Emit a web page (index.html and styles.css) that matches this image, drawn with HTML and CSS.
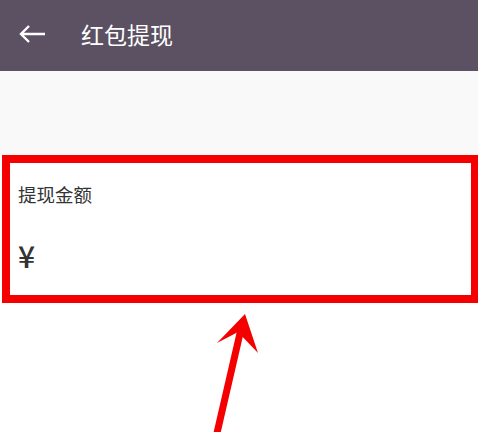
FILE: index.html
```html
<!DOCTYPE html>
<html lang="zh">
	<head>
		<meta charset="UTF-8" />
		<meta name="viewport" content="width=device-width, initial-scale=1.0" />
		<title>红包提现</title>
		<link rel="stylesheet" href="styles.css">
	</head>
	<body>
		<header class="top-bar">
			<svg class="back-icon" width="28" height="20" viewBox="0 0 28 20">
				<path d="M27 10 H3 M11 2 L3 10 L11 18" fill="none" stroke="#fff" stroke-width="2.4" />
			</svg>
			<h1 class="top-title">红包提现</h1>
		</header>
		<div class="gap-area"></div>
		<section class="amount-card">
			<p class="amount-label">提现金额</p>
			<p class="amount-value">¥</p>
		</section>
		<div class="lower-area">
			<svg class="mark-arrow" width="478" height="130" viewBox="0 304 478 130">
				<line x1="217" y1="434" x2="241" y2="330" stroke="#f40000" stroke-width="7" />
				<polygon points="245,315 217,344 238,333 258,354" fill="#f40000" />
			</svg>
		</div>
	</body>
</html>
```

FILE: styles.css
```css
body {
	margin: 0;
	width: 478px;
	height: 432px;
	overflow: hidden;
	background-color: #fff;
	font-family: "Noto Sans CJK SC", "Noto Sans", sans-serif;
}

.top-bar {
	height: 71px;
	background-color: #5b5163;
	display: flex;
	align-items: center;
	padding-left: 18px;
	padding-bottom: 3px;
	box-sizing: border-box;
}
.back-icon {
	display: block;
}
.top-title {
	margin: 0 0 0 35px;
	font-size: 23px;
	line-height: 30px;
	font-weight: normal;
	color: #fff;
}

.gap-area {
	height: 84px;
	background-color: #f9f9f9;
}

.amount-card {
	margin-left: 2px;
	height: 148px;
	box-sizing: border-box;
	border: 8px solid #f40000;
	border-right-width: 7px;
	background-color: #fff;
	padding: 18px 0 0 8px;
}
.amount-label {
	margin: 0;
	font-size: 18.5px;
	line-height: 26px;
	color: #333;
}
.amount-value {
	margin: 30px 0 0;
	font-size: 30px;
	line-height: 36px;
	font-weight: 500;
	color: #333;
}

.lower-area {
	height: 130px;
}
.mark-arrow {
	display: block;
}
```
